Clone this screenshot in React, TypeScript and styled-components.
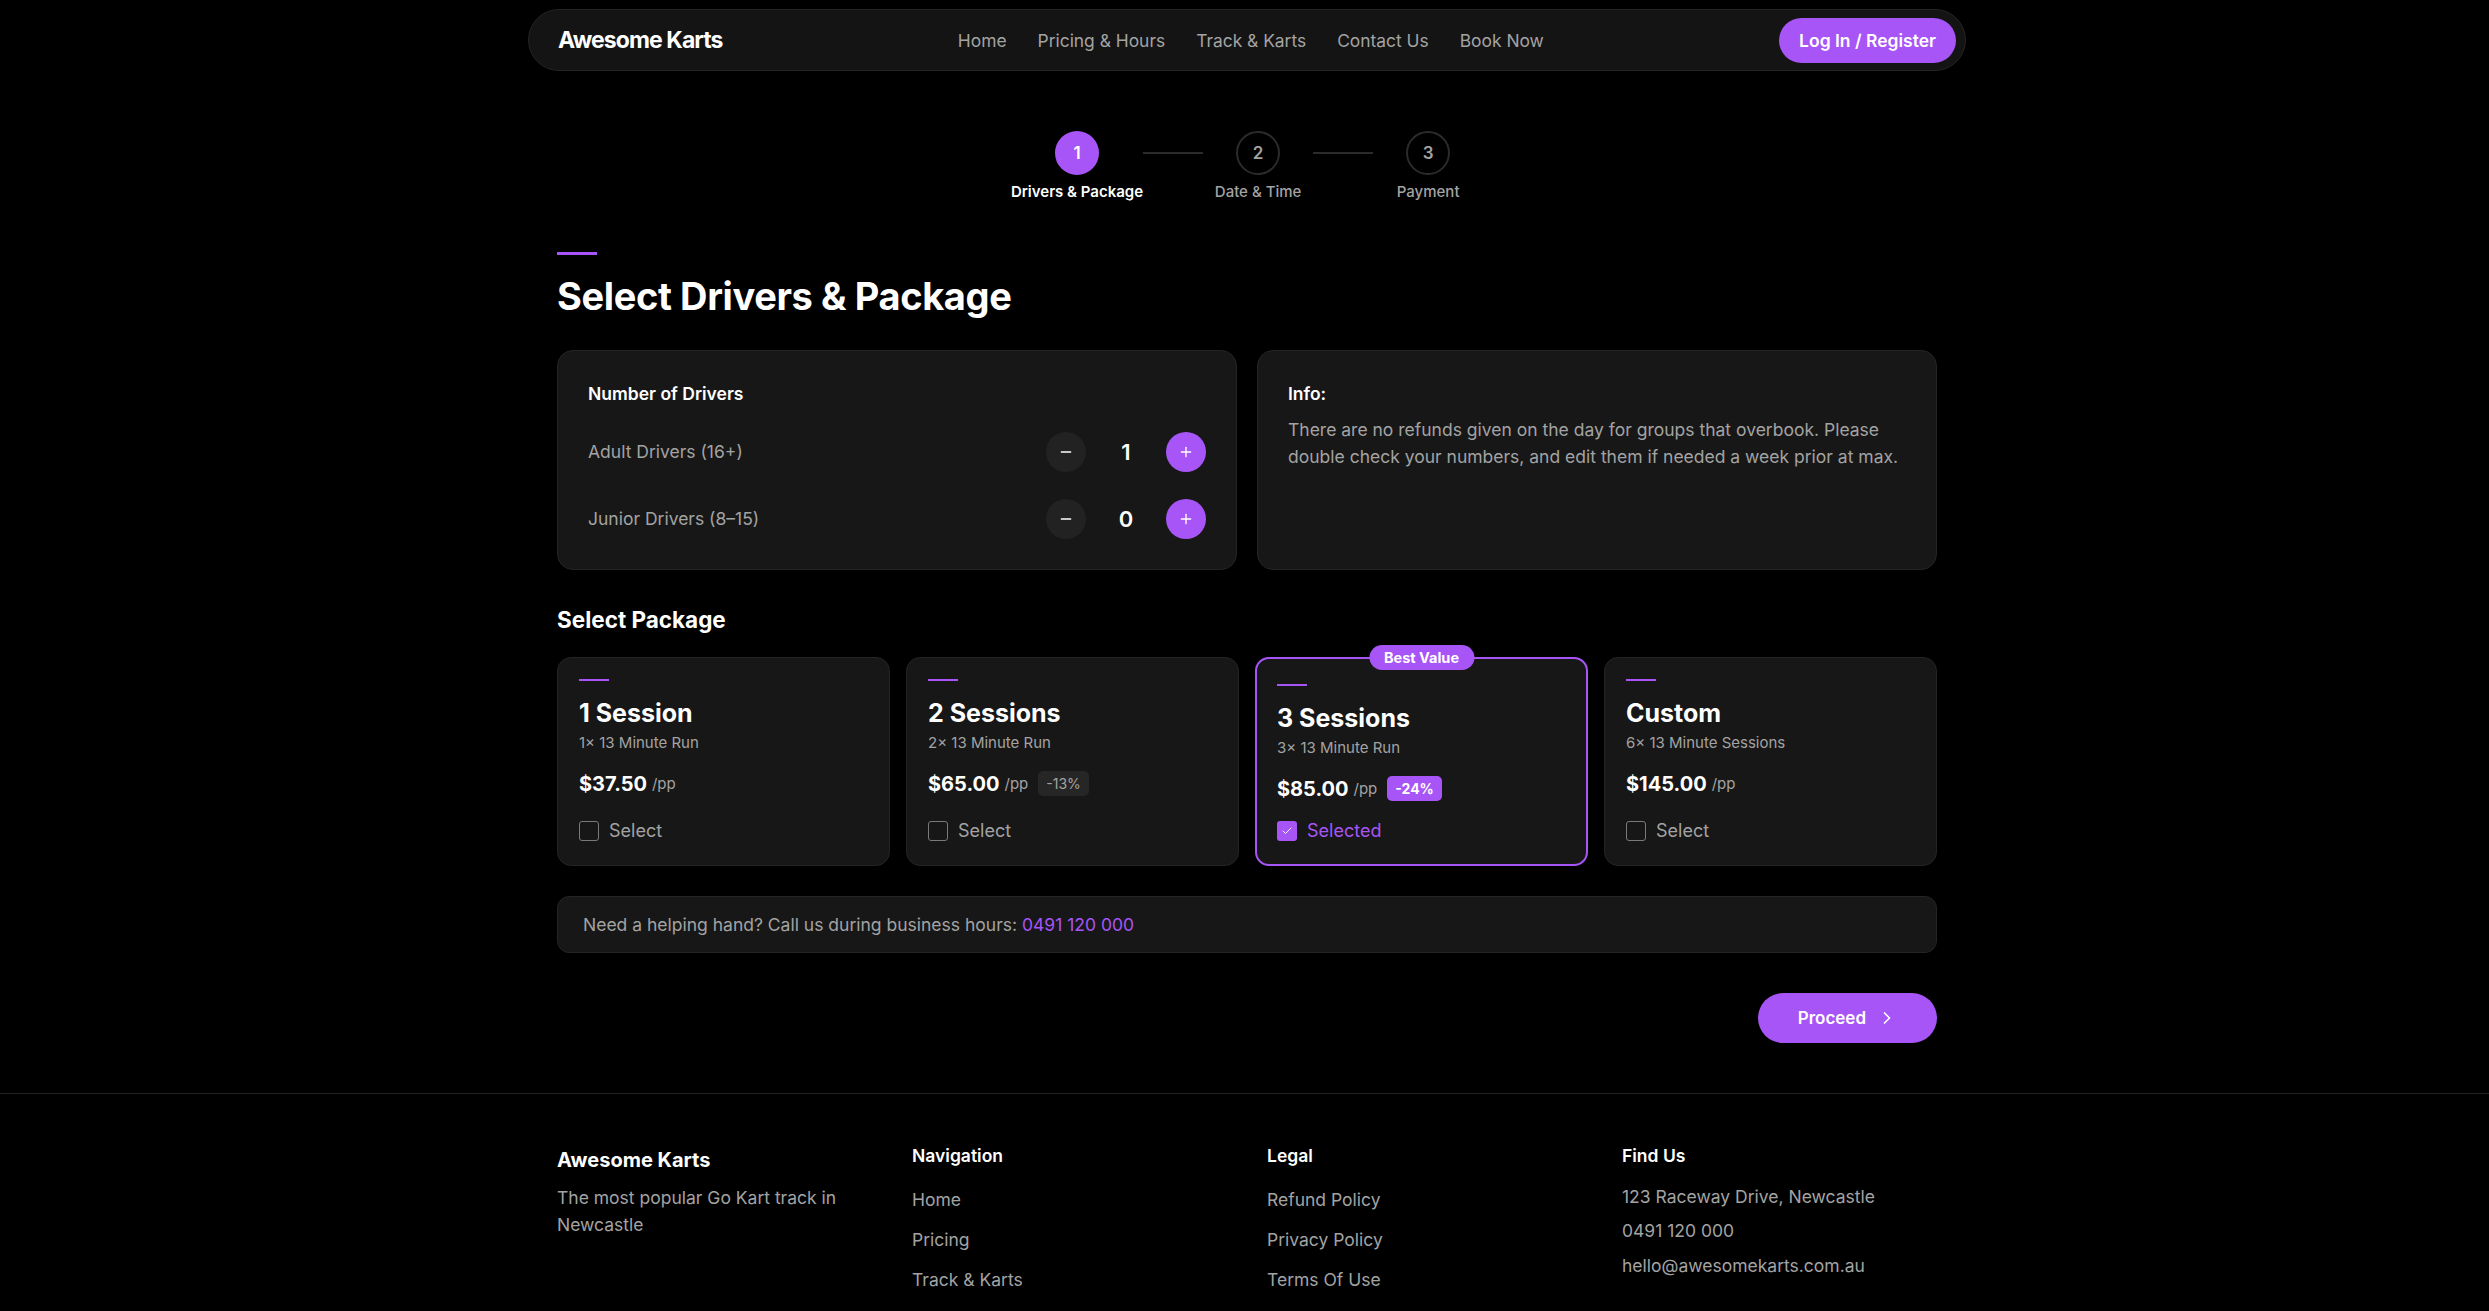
import React from 'react';
import styled, { createGlobalStyle, css } from 'styled-components';
import { Check, ChevronRight, Minus, Plus } from 'lucide-react';

const PURPLE = '#a855f7';
const GRAY = '#a3a3a3';

const GlobalStyle = createGlobalStyle`
  * {
    box-sizing: border-box;
  }

  body {
    margin: 0;
    background: #000;
    color: #fff;
    font-family: Inter, "Noto Sans", sans-serif;
  }

  p, h1, h2, h3, h4 {
    margin: 0;
  }
`;

const Page = styled.div`
  min-height: 100vh;
  background: #000;
`;

/* the layout sits a hair right of centre */
const Shell = styled.div`
  padding-left: 5px;
`;

/* ---------- nav ---------- */

const NavWrap = styled(Shell)`
  padding-top: 9px;
`;

const NavBar = styled.nav`
  max-width: 1438px;
  height: 62px;
  margin: 0 auto;
  padding: 0 9px 0 29px;
  display: flex;
  align-items: center;
  justify-content: space-between;
  background: #141414;
  border: 1px solid #242424;
  border-radius: 31px;
`;

const Logo = styled.div`
  font-size: 23px;
  font-weight: 700;
  letter-spacing: -0.04em;
  color: #fff;
`;

const NavLinks = styled.div`
  display: flex;
  gap: 31px;

  a {
    color: ${GRAY};
    font-size: 17.4px;
    text-decoration: none;
  }
`;

const PillButton = styled.button`
  border: none;
  background: ${PURPLE};
  color: #fff;
  font-family: inherit;
  font-weight: 600;
  border-radius: 999px;
  display: inline-flex;
  align-items: center;
  cursor: pointer;
`;

const LoginButton = styled(PillButton)`
  height: 45px;
  padding: 0 20px;
  font-size: 17.5px;
`;

/* ---------- main ---------- */

const Main = styled.main`
  max-width: 1380px;
  margin: 0 auto;
`;

const Stepper = styled.div`
  display: flex;
  justify-content: center;
  align-items: flex-start;
  margin-top: 60px;
`;

const Step = styled.div`
  min-width: 110px;
  display: flex;
  flex-direction: column;
  align-items: center;
`;

const StepCircle = styled.div<{ $active?: boolean }>`
  width: 44px;
  height: 44px;
  border-radius: 50%;
  display: flex;
  align-items: center;
  justify-content: center;
  font-size: 17px;
  font-weight: 600;
  ${({ $active }) =>
    $active
      ? css`
          background: ${PURPLE};
          color: #fff;
        `
      : css`
          border: 2px solid #2b2b2b;
          color: ${GRAY};
        `}
`;

const StepLabel = styled.span<{ $active?: boolean }>`
  margin-top: 7px;
  font-size: 15px;
  line-height: 20px;
  font-weight: ${({ $active }) => ($active ? 600 : 500)};
  color: ${({ $active }) => ($active ? '#fff' : GRAY)};
  white-space: nowrap;
`;

const StepLine = styled.div`
  width: 60px;
  height: 2px;
  margin-top: 21px;
  background: #2b2b2b;
`;

const Accent = styled.div<{ $small?: boolean }>`
  width: ${({ $small }) => ($small ? 30 : 40)}px;
  height: ${({ $small }) => ($small ? 2 : 3)}px;
  background: ${PURPLE};
`;

const PageTitle = styled.h1`
  margin-top: 19px;
  font-size: 38px;
  line-height: 1.2;
  font-weight: 700;
  letter-spacing: -0.01em;
`;

const SectionStart = styled.div`
  margin-top: 50px;
`;

const TopGrid = styled.div`
  display: grid;
  grid-template-columns: 1fr 1fr;
  gap: 20px;
  margin-top: 30px;
`;

const Panel = styled.section`
  background: #171717;
  border: 1px solid #242424;
  border-radius: 16px;
  padding: 29px 30px 30px;
  display: flex;
  flex-direction: column;
`;

const PanelTitle = styled.h3`
  font-size: 17.5px;
  line-height: 27px;
  font-weight: 600;
`;

const DriverRows = styled.div`
  display: flex;
  flex-direction: column;
  gap: 27px;
  margin-top: 25px;
`;

const DriverRow = styled.div`
  display: flex;
  align-items: center;
  justify-content: space-between;
`;

const RowLabel = styled.span`
  font-size: 17.5px;
  color: ${GRAY};
`;

const Counter = styled.div`
  display: flex;
  align-items: center;
  gap: 20px;
`;

const RoundButton = styled.button<{ $primary?: boolean }>`
  width: 40px;
  height: 40px;
  border-radius: 50%;
  border: none;
  display: flex;
  align-items: center;
  justify-content: center;
  color: #fff;
  background: ${({ $primary }) => ($primary ? PURPLE : '#222')};
  cursor: pointer;
`;

const Count = styled.span`
  width: 40px;
  text-align: center;
  font-size: 22px;
  font-weight: 600;
`;

const InfoText = styled.p`
  margin-top: 9px;
  font-size: 17.5px;
  line-height: 27px;
  color: ${GRAY};
`;

const SubHeading = styled.h2`
  margin-top: 35px;
  font-size: 22.5px;
  line-height: 1.3;
  font-weight: 700;
`;

const PackageGrid = styled.div`
  display: grid;
  grid-template-columns: repeat(4, 1fr);
  gap: 16px;
  margin-top: 23px;
`;

const PackageCard = styled.div<{ $selected?: boolean }>`
  position: relative;
  display: flex;
  flex-direction: column;
  background: #171717;
  border-radius: 14px;
  ${({ $selected }) =>
    $selected
      ? css`
          border: 2px solid ${PURPLE};
          padding: 25px 20px 23px;
        `
      : css`
          border: 1px solid #242424;
          padding: 21px 21px 24px;
        `}
`;

const BestBadge = styled.span`
  position: absolute;
  top: -14px;
  left: 50%;
  transform: translateX(-50%);
  height: 25px;
  padding: 0 15px;
  display: flex;
  align-items: center;
  border-radius: 999px;
  background: ${PURPLE};
  color: #fff;
  font-size: 14.5px;
  font-weight: 700;
  white-space: nowrap;
`;

const PackageTitle = styled.h3`
  margin-top: 17px;
  font-size: 25px;
  line-height: 30px;
  font-weight: 700;
`;

const PackageSub = styled.p`
  margin-top: 5px;
  font-size: 15px;
  line-height: 20px;
  color: ${GRAY};
`;

const PriceRow = styled.div`
  margin-top: 18px;
  height: 26px;
  display: flex;
  align-items: center;
`;

const Price = styled.span`
  font-size: 20px;
  font-weight: 700;
`;

const PerPerson = styled.span`
  margin-left: 5px;
  font-size: 15px;
  color: ${GRAY};
`;

const Discount = styled.span<{ $hot?: boolean }>`
  margin-left: 10px;
  height: 25px;
  padding: 0 8px;
  display: inline-flex;
  align-items: center;
  border-radius: 5px;
  font-size: 14px;
  ${({ $hot }) =>
    $hot
      ? css`
          background: ${PURPLE};
          color: #fff;
          font-weight: 700;
        `
      : css`
          background: #262626;
          color: ${GRAY};
        `}
`;

const SelectRow = styled.label<{ $checked?: boolean }>`
  margin-top: auto;
  padding-top: 19px;
  height: 39px;
  display: flex;
  align-items: center;
  gap: 10px;
  font-size: 18px;
  color: ${({ $checked }) => ($checked ? PURPLE : GRAY)};
`;

const CheckBox = styled.span<{ $checked?: boolean }>`
  width: 20px;
  height: 20px;
  border-radius: 3px;
  display: flex;
  align-items: center;
  justify-content: center;
  border: ${({ $checked }) => ($checked ? 'none' : '1.5px solid #7a7a7a')};
  background: ${({ $checked }) => ($checked ? PURPLE : 'transparent')};
  color: #fff;
`;

const HelpBar = styled.div`
  margin-top: 30px;
  height: 57px;
  padding: 0 25px;
  display: flex;
  align-items: center;
  background: #171717;
  border: 1px solid #242424;
  border-radius: 12px;
  font-size: 17.5px;
  color: ${GRAY};

  a {
    color: ${PURPLE};
    text-decoration: none;
    margin-left: 5px;
  }
`;

const Actions = styled.div`
  margin-top: 40px;
  display: flex;
  justify-content: flex-end;
`;

const ProceedButton = styled(PillButton)`
  height: 50px;
  padding: 0 40px;
  gap: 11px;
  font-size: 17px;
`;

/* ---------- footer ---------- */

const Footer = styled.footer`
  margin-top: 50px;
  border-top: 1px solid #222;
  padding: 50px 0 60px 5px;
`;

const FooterGrid = styled.div`
  max-width: 1380px;
  margin: 0 auto;
  display: grid;
  grid-template-columns: repeat(4, 1fr);
  gap: 40px;
`;

const FooterCol = styled.div`
  display: flex;
  flex-direction: column;
`;

const FooterBrand = styled.h3`
  margin-top: 4px;
  font-size: 20px;
  line-height: 24px;
  font-weight: 700;
`;

const FooterHeading = styled.h4`
  font-size: 17.5px;
  line-height: 24px;
  font-weight: 600;
`;

const FooterText = styled.p`
  margin-top: 12px;
  font-size: 17.5px;
  line-height: 27px;
  color: ${GRAY};
  max-width: 300px;
`;

const FooterLinks = styled.div`
  margin-top: 20px;
  display: flex;
  flex-direction: column;
  gap: 16px;

  a {
    font-size: 17.5px;
    line-height: 24px;
    color: ${GRAY};
    text-decoration: none;
  }
`;

const ContactList = styled.div`
  margin-top: 15px;
  display: flex;
  flex-direction: column;
  gap: 7.5px;

  span {
    font-size: 17.5px;
    line-height: 27px;
    color: ${GRAY};
  }
`;

const steps = ['Drivers & Package', 'Date & Time', 'Payment'];

const drivers = [
  { label: 'Adult Drivers (16+)', count: 1 },
  { label: 'Junior Drivers (8–15)', count: 0 },
];

const packages = [
  { title: '1 Session', sub: '1× 13 Minute Run', price: '$37.50' },
  { title: '2 Sessions', sub: '2× 13 Minute Run', price: '$65.00', discount: '-13%' },
  { title: '3 Sessions', sub: '3× 13 Minute Run', price: '$85.00', discount: '-24%', best: true },
  { title: 'Custom', sub: '6× 13 Minute Sessions', price: '$145.00' },
];

const App: React.FC = () => {
  const selected = 2;

  return (
    <Page>
      <GlobalStyle />
      <NavWrap>
        <NavBar>
          <Logo>Awesome Karts</Logo>
          <NavLinks>
            <a href="#">Home</a>
            <a href="#">Pricing &amp; Hours</a>
            <a href="#">Track &amp; Karts</a>
            <a href="#">Contact Us</a>
            <a href="#">Book Now</a>
          </NavLinks>
          <LoginButton>Log In / Register</LoginButton>
        </NavBar>
      </NavWrap>

      <Shell>
        <Main>
          <Stepper>
            {steps.map((label, i) => (
              <React.Fragment key={label}>
                {i > 0 && <StepLine />}
                <Step>
                  <StepCircle $active={i === 0}>{i + 1}</StepCircle>
                  <StepLabel $active={i === 0}>{label}</StepLabel>
                </Step>
              </React.Fragment>
            ))}
          </Stepper>

          <SectionStart>
            <Accent />
            <PageTitle>Select Drivers &amp; Package</PageTitle>
          </SectionStart>

          <TopGrid>
            <Panel>
              <PanelTitle>Number of Drivers</PanelTitle>
              <DriverRows>
                {drivers.map((d) => (
                  <DriverRow key={d.label}>
                    <RowLabel>{d.label}</RowLabel>
                    <Counter>
                      <RoundButton aria-label="decrease">
                        <Minus size={16} strokeWidth={2} />
                      </RoundButton>
                      <Count>{d.count}</Count>
                      <RoundButton $primary aria-label="increase">
                        <Plus size={16} strokeWidth={2} />
                      </RoundButton>
                    </Counter>
                  </DriverRow>
                ))}
              </DriverRows>
            </Panel>
            <Panel>
              <PanelTitle>Info:</PanelTitle>
              <InfoText>
                There are no refunds given on the day for groups that overbook. Please double check your
                numbers, and edit them if needed a week prior at max.
              </InfoText>
            </Panel>
          </TopGrid>

          <SubHeading>Select Package</SubHeading>
          <PackageGrid>
            {packages.map((p, i) => {
              const isSel = i === selected;
              return (
                <PackageCard key={p.title} $selected={isSel}>
                  {p.best && <BestBadge>Best Value</BestBadge>}
                  <Accent $small />
                  <PackageTitle>{p.title}</PackageTitle>
                  <PackageSub>{p.sub}</PackageSub>
                  <PriceRow>
                    <Price>{p.price}</Price>
                    <PerPerson>/pp</PerPerson>
                    {p.discount && <Discount $hot={isSel}>{p.discount}</Discount>}
                  </PriceRow>
                  <SelectRow $checked={isSel}>
                    <CheckBox $checked={isSel}>{isSel && <Check size={12} strokeWidth={2} />}</CheckBox>
                    {isSel ? 'Selected' : 'Select'}
                  </SelectRow>
                </PackageCard>
              );
            })}
          </PackageGrid>

          <HelpBar>
            Need a helping hand? Call us during business hours:
            <a href="#">0491 120 000</a>
          </HelpBar>

          <Actions>
            <ProceedButton>
              Proceed
              <ChevronRight size={20} strokeWidth={2} />
            </ProceedButton>
          </Actions>
        </Main>
      </Shell>

      <Footer>
        <FooterGrid>
          <FooterCol>
            <FooterBrand>Awesome Karts</FooterBrand>
            <FooterText>The most popular Go Kart track in Newcastle</FooterText>
          </FooterCol>
          <FooterCol>
            <FooterHeading>Navigation</FooterHeading>
            <FooterLinks>
              <a href="#">Home</a>
              <a href="#">Pricing</a>
              <a href="#">Track &amp; Karts</a>
            </FooterLinks>
          </FooterCol>
          <FooterCol>
            <FooterHeading>Legal</FooterHeading>
            <FooterLinks>
              <a href="#">Refund Policy</a>
              <a href="#">Privacy Policy</a>
              <a href="#">Terms Of Use</a>
            </FooterLinks>
          </FooterCol>
          <FooterCol>
            <FooterHeading>Find Us</FooterHeading>
            <ContactList>
              <span>123 Raceway Drive, Newcastle</span>
              <span>0491 120 000</span>
              <span>hello@awesomekarts.com.au</span>
            </ContactList>
          </FooterCol>
        </FooterGrid>
      </Footer>
    </Page>
  );
};

export default App;
